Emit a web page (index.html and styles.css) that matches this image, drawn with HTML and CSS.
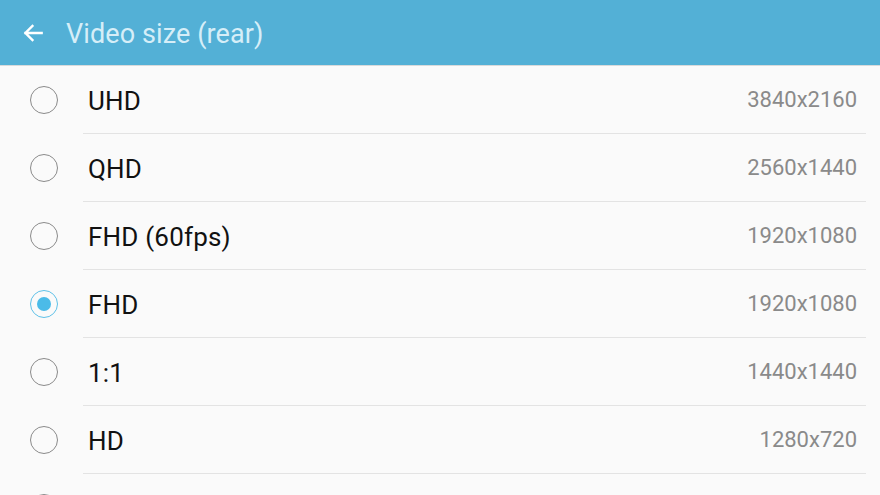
FILE: index.html
```html
<!DOCTYPE html>
<html lang="en">
<head>
  <meta charset="UTF-8" />
  <meta name="viewport" content="width=device-width, initial-scale=1.0"/>
  <title>Video size (rear)</title>
<link rel="stylesheet" href="styles.css">
</head>
<body>

  <div class="header">
    <svg class="back" width="26" height="26" viewBox="0 0 24 24">
      <path d="M20 12H5M11.5 5.5L5 12l6.5 6.5" fill="none" stroke="#ffffff" stroke-width="2.2" stroke-linecap="square"/>
    </svg>
    <div class="title">Video size (rear)</div>
  </div>

  <div class="list">
    <div class="row">
      <div class="radio-wrap"><span class="radio"></span></div>
      <div class="content"><span class="label">UHD</span><span class="value">3840x2160</span></div>
    </div>
    <div class="row">
      <div class="radio-wrap"><span class="radio"></span></div>
      <div class="content"><span class="label">QHD</span><span class="value">2560x1440</span></div>
    </div>
    <div class="row">
      <div class="radio-wrap"><span class="radio"></span></div>
      <div class="content"><span class="label">FHD (60fps)</span><span class="value">1920x1080</span></div>
    </div>
    <div class="row">
      <div class="radio-wrap"><span class="radio checked"></span></div>
      <div class="content"><span class="label">FHD</span><span class="value">1920x1080</span></div>
    </div>
    <div class="row">
      <div class="radio-wrap"><span class="radio"></span></div>
      <div class="content"><span class="label">1:1</span><span class="value">1440x1440</span></div>
    </div>
    <div class="row">
      <div class="radio-wrap"><span class="radio"></span></div>
      <div class="content"><span class="label">HD</span><span class="value">1280x720</span></div>
    </div>
    <div class="row">
      <div class="radio-wrap"><span class="radio"></span></div>
      <div class="content"></div>
    </div>
  </div>

</body>
</html>
```

FILE: styles.css
```css
* {
  box-sizing: border-box;
  font-family: Roboto, 'Noto Sans', sans-serif;
}

body {
  margin: 0;
  padding: 0;
  background: #fafafa;
  height: 495px;
  overflow: hidden;
}

.header {
  height: 66px;
  background: #53b0d6;
  display: flex;
  align-items: center;
  padding-left: 20px;
  border-bottom: 1px solid #d8dadb;
}

.back {
  margin-right: 20px;
  margin-top: 1px;
}

.title {
  color: #d6eef8;
  font-size: 27px;
  letter-spacing: 0.1px;
  padding-top: 3px;
}

.row {
  display: flex;
  height: 68px;
}

.radio-wrap {
  width: 83px;
  display: flex;
  align-items: center;
  padding-left: 30px;
}

.radio {
  width: 28px;
  height: 28px;
  border: 1.5px solid #8a8a8a;
  border-radius: 50%;
  display: flex;
  align-items: center;
  justify-content: center;
}

.radio.checked {
  border-color: #5ec1e8;
}

.radio.checked::after {
  content: "";
  width: 14px;
  height: 14px;
  border-radius: 50%;
  background: #4bbbe8;
}

.content {
  flex: 1;
  display: flex;
  align-items: center;
  justify-content: space-between;
  border-bottom: 1px solid #e3e3e3;
  margin-right: 14px;
  padding-left: 5px;
  padding-right: 9px;
}

.label {
  font-size: 26px;
  color: #111111;
  letter-spacing: 0.2px;
  padding-top: 2px;
}

.value {
  font-size: 22px;
  color: #8a8a8a;
}
```
